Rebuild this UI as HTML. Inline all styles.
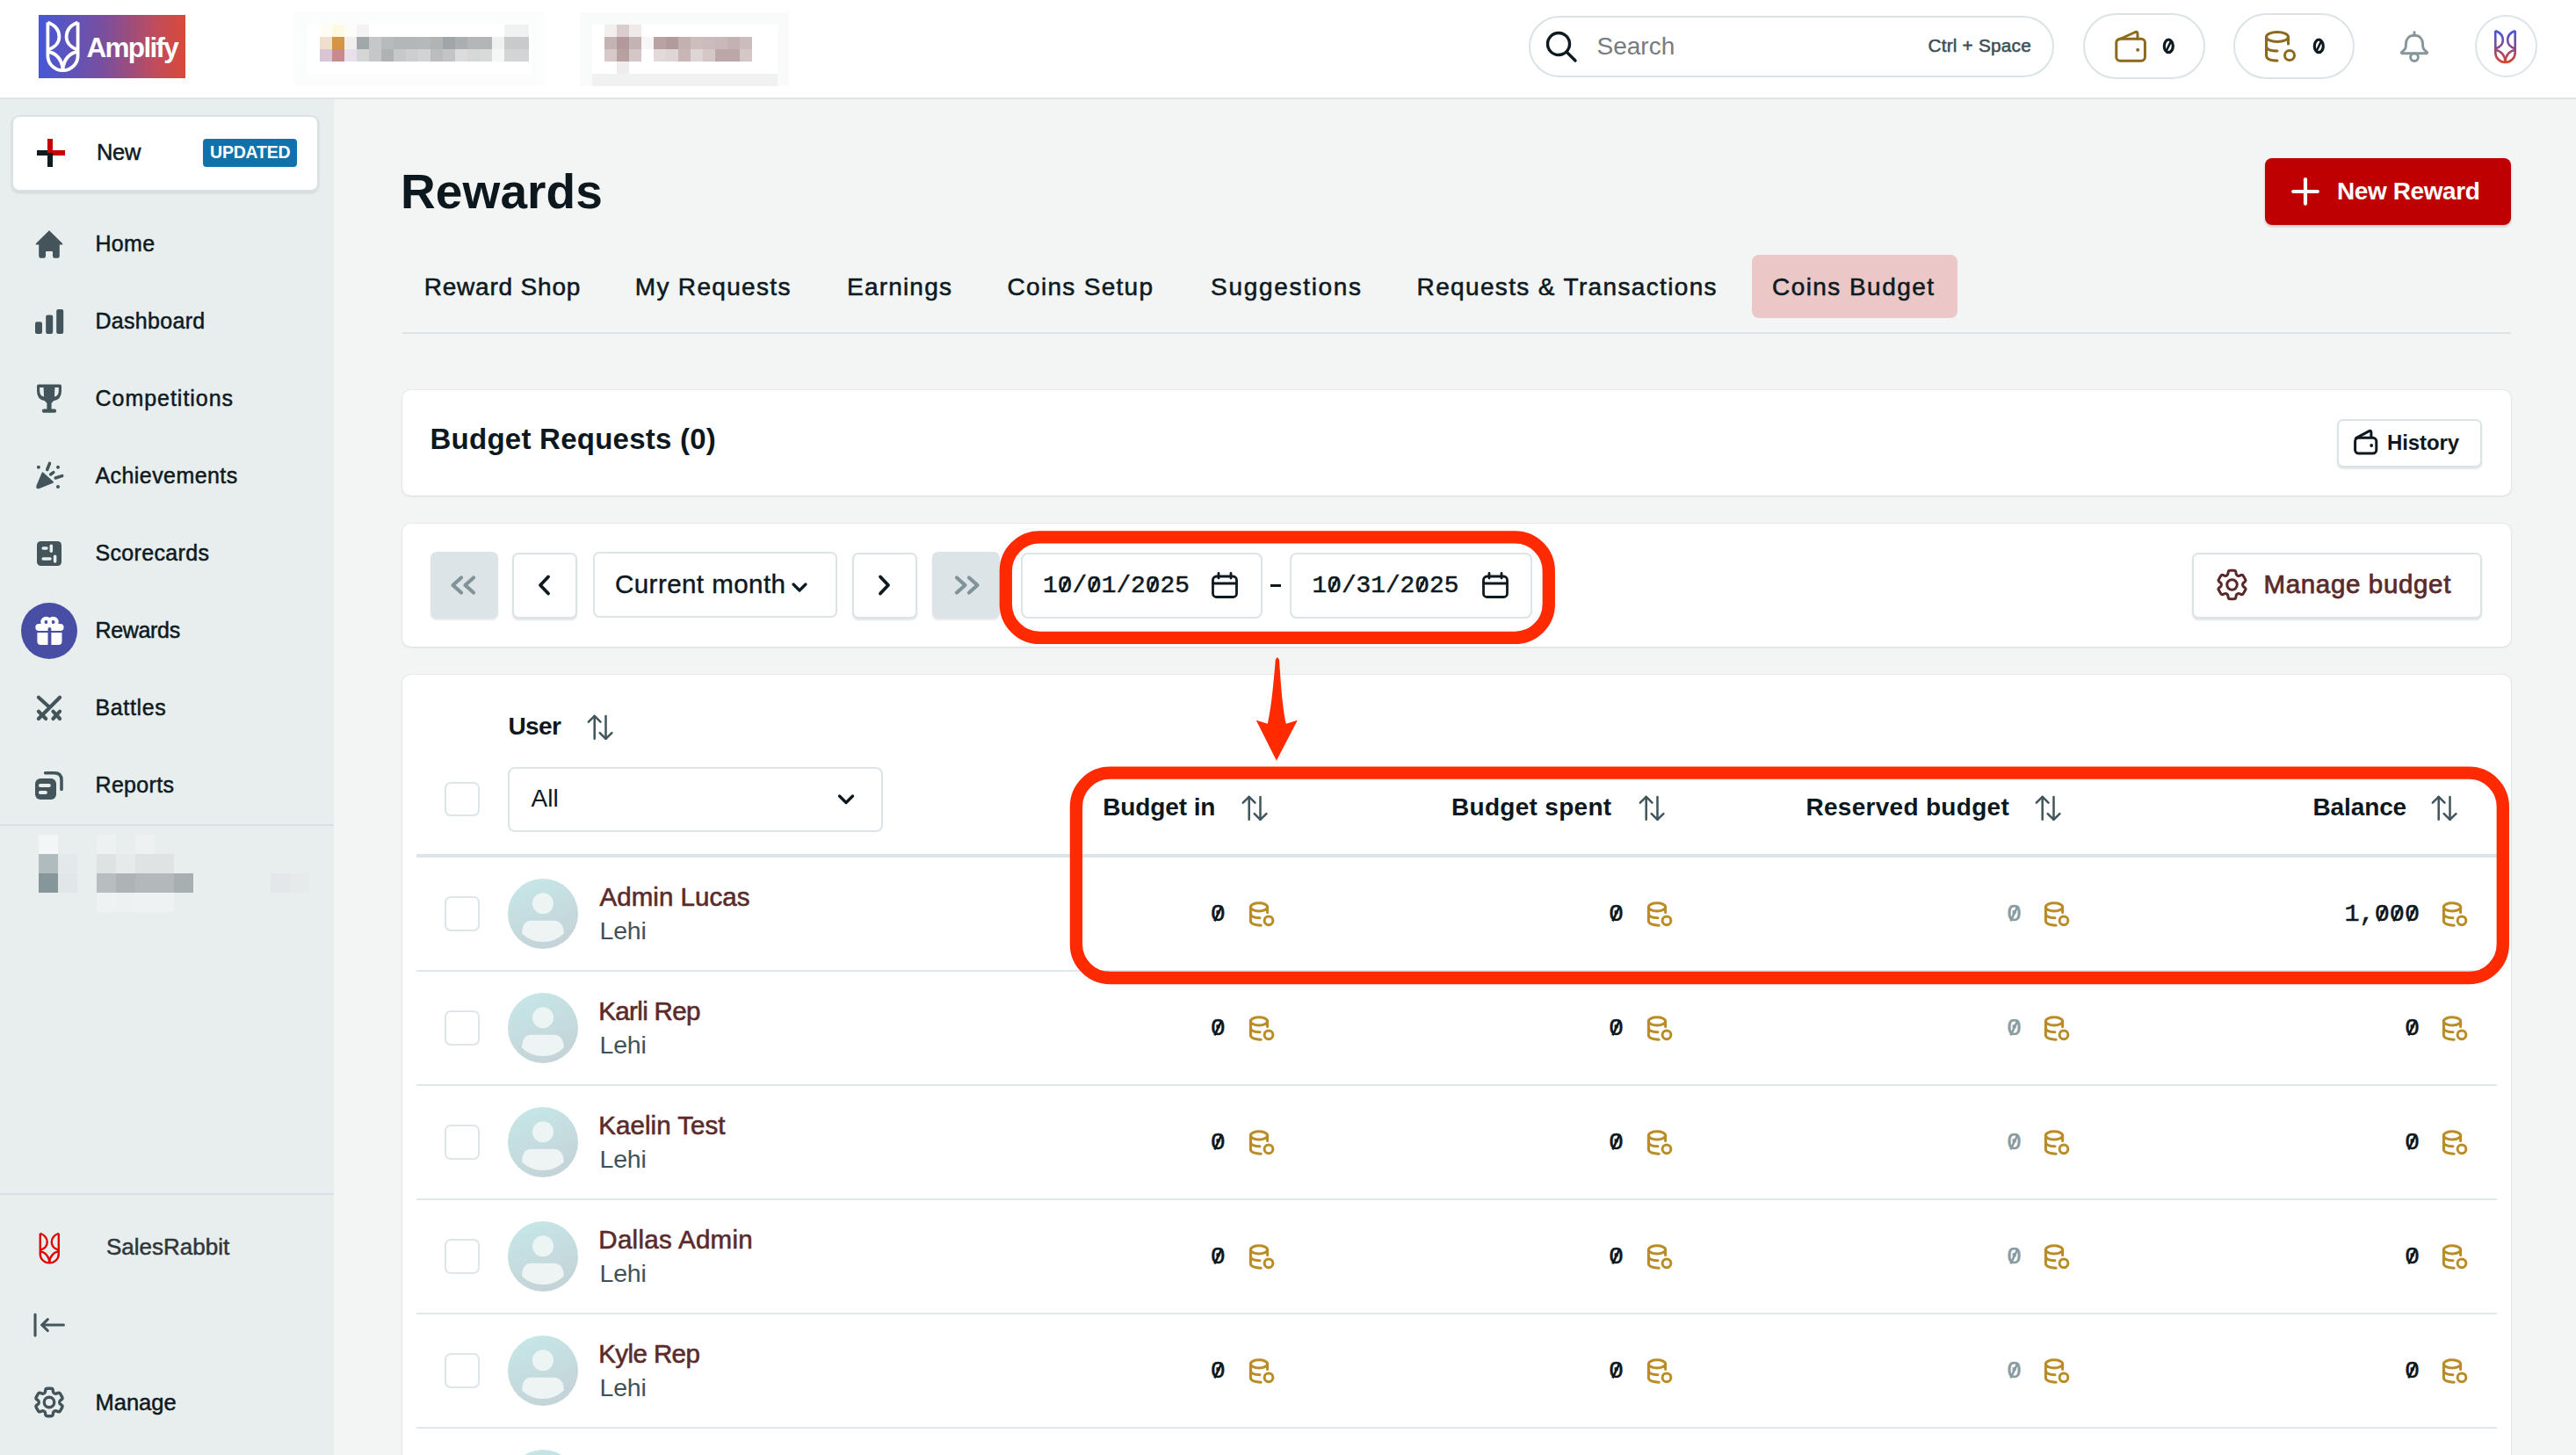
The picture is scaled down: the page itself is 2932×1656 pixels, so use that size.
<!DOCTYPE html>
<html><head><meta charset="utf-8">
<style>
*{box-sizing:border-box;margin:0;padding:0}
html,body{width:2932px;height:1656px;overflow:hidden;background:#f3f5f5;font-family:"Liberation Sans",sans-serif;color:#0e1a1f}
.a{position:absolute}
.t{position:absolute;white-space:nowrap;line-height:1}
#hdr{position:absolute;left:0;top:0;width:2932px;height:113px;background:#fff;border-bottom:2px solid #dde5e8}
#side{position:absolute;left:0;top:113px;width:380px;height:1543px;background:#e8eeee}
.card{position:absolute;background:#fff;border-radius:9px;box-shadow:0 0 1.5px rgba(0,0,0,.16),0 1px 3px rgba(0,0,0,.08)}
.btn{position:absolute;background:#fff;border:2px solid #dae3e6;border-radius:7px;box-shadow:0 2px 2px rgba(20,40,50,.12)}
.nav{font-size:25px;letter-spacing:.3px;color:#0e1a1f;-webkit-text-stroke:.5px #0e1a1f}
.tab{font-size:28px;letter-spacing:.8px;color:#0e1a1f;-webkit-text-stroke:.55px #0e1a1f}
.mono{font-family:"Liberation Mono",monospace;-webkit-text-stroke:.5px currentColor}
.z{position:relative;display:inline-block}
.z{position:relative;display:inline-block}
.zs{position:absolute;left:0;top:0;width:.6em;height:1em;overflow:visible}
svg{position:absolute;overflow:visible}
</style></head><body>

<!-- HEADER -->
<div id="hdr"></div>
<div class="a" style="left:44px;top:17px;width:167px;height:72px;background:linear-gradient(90deg,#4657d8 0%,#7a4f9c 45%,#c04c5c 80%,#d9493a 100%)"></div>
<svg style="left:50px;top:21px" width="43" height="64" viewBox="-4.4 -4.5 43 64"><g fill="none" stroke="#fff" stroke-width="3.8" stroke-linejoin="round"><path d="M0 0 V38 C0 47.5 8 54.7 17.1 54.7 C26.2 54.7 34.2 47.5 34.2 38 V0"/><path d="M0 0 C8 3 13 9 13 16.4 C13 23 8 28.5 0 31"/><path d="M34.2 0 C26.2 3 21.2 9 21.2 16.4 C21.2 23 26.2 28.5 34.2 31"/><path d="M0 33.5 C9 34.5 16.5 42 17.1 54"/><path d="M34.2 33.5 C25.2 34.5 17.7 42 17.1 54"/></g></svg>
<div class="t" style="left:98.5px;top:38.6px;font-size:31.5px;font-weight:bold;color:#fff;letter-spacing:-1.7px">Amplify</div>

<!-- blurred breadcrumb -->
<div class="a" style="left:335px;top:14px;width:285px;height:84px;background:#fbfcfc"></div>
<div class="a" style="left:350px;top:28px;width:255px;height:56px;background:#fff"></div>
<div class="a" style="left:660px;top:14px;width:238px;height:84px;background:#f9fafa"></div>
<div class="a" style="left:674px;top:28px;width:211px;height:56px;background:#fff"></div>
<div class="a" style="left:674px;top:84px;width:211px;height:14px;background:#f0f2f2"></div>
<div class="a" style="left:364px;top:28px;width:14px;height:14px;background:#fffdf3"></div><div class="a" style="left:378px;top:28px;width:14px;height:14px;background:#fff9e2"></div><div class="a" style="left:392px;top:28px;width:14px;height:14px;background:#fdfcf8"></div><div class="a" style="left:406px;top:28px;width:14px;height:14px;background:#f3f3f3"></div><div class="a" style="left:574px;top:28px;width:14px;height:14px;background:#f0f1f1"></div><div class="a" style="left:588px;top:28px;width:14px;height:14px;background:#f0f1f1"></div><div class="a" style="left:364px;top:42px;width:14px;height:14px;background:#f0dfcc"></div><div class="a" style="left:378px;top:42px;width:14px;height:14px;background:#d69443"></div><div class="a" style="left:392px;top:42px;width:14px;height:14px;background:#f0efed"></div><div class="a" style="left:406px;top:42px;width:14px;height:14px;background:#a1a7a9"></div><div class="a" style="left:420px;top:42px;width:14px;height:14px;background:#c5c7c8"></div><div class="a" style="left:434px;top:42px;width:14px;height:14px;background:#b7bbbc"></div><div class="a" style="left:448px;top:42px;width:14px;height:14px;background:#b3b7b8"></div><div class="a" style="left:462px;top:42px;width:14px;height:14px;background:#b3b7b8"></div><div class="a" style="left:476px;top:42px;width:14px;height:14px;background:#b5b9ba"></div><div class="a" style="left:490px;top:42px;width:14px;height:14px;background:#b0b4b5"></div><div class="a" style="left:504px;top:42px;width:14px;height:14px;background:#9fa5a8"></div><div class="a" style="left:518px;top:42px;width:14px;height:14px;background:#abafb2"></div><div class="a" style="left:532px;top:42px;width:14px;height:14px;background:#b3b7b8"></div><div class="a" style="left:546px;top:42px;width:14px;height:14px;background:#b1b5b6"></div><div class="a" style="left:560px;top:42px;width:14px;height:14px;background:#eff0f0"></div><div class="a" style="left:574px;top:42px;width:14px;height:14px;background:#c8cacb"></div><div class="a" style="left:588px;top:42px;width:14px;height:14px;background:#c8cacb"></div><div class="a" style="left:364px;top:56px;width:14px;height:14px;background:#d9c5d3"></div><div class="a" style="left:378px;top:56px;width:14px;height:14px;background:#c98a8e"></div><div class="a" style="left:392px;top:56px;width:14px;height:14px;background:#e8e0ec"></div><div class="a" style="left:406px;top:56px;width:14px;height:14px;background:#d4d6d6"></div><div class="a" style="left:420px;top:56px;width:14px;height:14px;background:#c5c7c8"></div><div class="a" style="left:434px;top:56px;width:14px;height:14px;background:#aeb2b3"></div><div class="a" style="left:448px;top:56px;width:14px;height:14px;background:#c6c8c9"></div><div class="a" style="left:462px;top:56px;width:14px;height:14px;background:#cdced0"></div><div class="a" style="left:476px;top:56px;width:14px;height:14px;background:#d2d3d4"></div><div class="a" style="left:490px;top:56px;width:14px;height:14px;background:#babcbd"></div><div class="a" style="left:504px;top:56px;width:14px;height:14px;background:#c2c4c5"></div><div class="a" style="left:518px;top:56px;width:14px;height:14px;background:#dcdcdd"></div><div class="a" style="left:532px;top:56px;width:14px;height:14px;background:#d6d7d7"></div><div class="a" style="left:546px;top:56px;width:14px;height:14px;background:#d8d9d9"></div><div class="a" style="left:560px;top:56px;width:14px;height:14px;background:#f5f6f6"></div><div class="a" style="left:574px;top:56px;width:14px;height:14px;background:#d3d4d5"></div><div class="a" style="left:588px;top:56px;width:14px;height:14px;background:#d3d4d5"></div><div class="a" style="left:688px;top:28px;width:14px;height:14px;background:#f3efef"></div><div class="a" style="left:702px;top:28px;width:14px;height:14px;background:#d9cdce"></div><div class="a" style="left:716px;top:28px;width:14px;height:14px;background:#efe9ea"></div><div class="a" style="left:688px;top:42px;width:14px;height:14px;background:#c4b3b3"></div><div class="a" style="left:702px;top:42px;width:14px;height:14px;background:#b39999"></div><div class="a" style="left:716px;top:42px;width:14px;height:14px;background:#c4b3b3"></div><div class="a" style="left:730px;top:42px;width:14px;height:14px;background:#f7f5f5"></div><div class="a" style="left:744px;top:42px;width:14px;height:14px;background:#b9a2a3"></div><div class="a" style="left:758px;top:42px;width:14px;height:14px;background:#b39b9c"></div><div class="a" style="left:772px;top:42px;width:14px;height:14px;background:#c3b0b1"></div><div class="a" style="left:786px;top:42px;width:14px;height:14px;background:#cdbdbd"></div><div class="a" style="left:800px;top:42px;width:14px;height:14px;background:#cbbbbc"></div><div class="a" style="left:814px;top:42px;width:14px;height:14px;background:#c8b8b9"></div><div class="a" style="left:828px;top:42px;width:14px;height:14px;background:#c4b2b3"></div><div class="a" style="left:842px;top:42px;width:14px;height:14px;background:#cbbcbd"></div><div class="a" style="left:688px;top:56px;width:14px;height:14px;background:#d7c8c9"></div><div class="a" style="left:702px;top:56px;width:14px;height:14px;background:#b8a0a1"></div><div class="a" style="left:716px;top:56px;width:14px;height:14px;background:#d5c6c7"></div><div class="a" style="left:730px;top:56px;width:14px;height:14px;background:#ffffff"></div><div class="a" style="left:744px;top:56px;width:14px;height:14px;background:#e3d9da"></div><div class="a" style="left:758px;top:56px;width:14px;height:14px;background:#e0d5d6"></div><div class="a" style="left:772px;top:56px;width:14px;height:14px;background:#c8b6b7"></div><div class="a" style="left:786px;top:56px;width:14px;height:14px;background:#e0d5d6"></div><div class="a" style="left:800px;top:56px;width:14px;height:14px;background:#d5c6c7"></div><div class="a" style="left:814px;top:56px;width:14px;height:14px;background:#bca7a8"></div><div class="a" style="left:828px;top:56px;width:14px;height:14px;background:#bca7a8"></div><div class="a" style="left:842px;top:56px;width:14px;height:14px;background:#d5c6c7"></div><div class="a" style="left:702px;top:70px;width:14px;height:14px;background:#f0ecec"></div>

<!-- search -->
<div class="a" style="left:1740px;top:18px;width:598px;height:70px;border:2px solid #d9e3e6;border-radius:36px;background:#fff"></div>
<svg style="left:1759px;top:35px" width="36" height="36" viewBox="0 0 36 36"><circle cx="15" cy="15" r="12.5" fill="none" stroke="#0e1a1f" stroke-width="3.4"/><path d="M24 24 L34 34" stroke="#0e1a1f" stroke-width="3.4" stroke-linecap="round"/></svg>
<div class="t" style="left:1817.5px;top:38.5px;font-size:28px;color:#767b7d">Search</div>
<div class="t" style="left:2194.5px;top:41.5px;font-size:20.8px;letter-spacing:.2px;color:#3d4f55;-webkit-text-stroke:.55px #3d4f55">Ctrl + Space</div>

<!-- pills -->
<div class="a" style="left:2371px;top:15px;width:139px;height:75px;border:2px solid #dbe3e6;border-radius:38px;background:#fff"></div>
<svg style="left:2407px;top:35px" width="36" height="36" viewBox="0 0 36 36"><path d="M3.5 10.5 L23.5 1.5 Q26 0.6 26 3.5 L26 9" fill="none" stroke="#8c6a1c" stroke-width="3" stroke-linejoin="round" stroke-linecap="round"/><rect x="1.8" y="9.3" width="32.6" height="24.9" rx="4.2" fill="none" stroke="#8c6a1c" stroke-width="3"/><circle cx="26.2" cy="21.7" r="2" fill="#8c6a1c"/></svg>
<svg style="left:2461px;top:43px" width="15" height="19" viewBox="0 0 15 19"><g fill="none" stroke="#0e1a1f" stroke-linecap="round"><ellipse cx="7.3" cy="9.4" rx="5" ry="7.2" stroke-width="3.2"/><path d="M5 14.2 L9.8 4.4" stroke-width="2.6"/></g></svg>
<div class="a" style="left:2542px;top:15px;width:138px;height:75px;border:2px solid #dbe3e6;border-radius:38px;background:#fff"></div>
<svg style="left:2578px;top:35px" width="36" height="36" viewBox="0 0 36 36"><g fill="none" stroke="#8c6a1c" stroke-width="3" stroke-linecap="round"><ellipse cx="14" cy="7" rx="12.5" ry="5.5"/><path d="M1.5 7 V28 Q1.5 34 14 34"/><path d="M26.5 7 V15"/><path d="M1.5 17.5 Q1.5 23 14 23"/><circle cx="28" cy="28" r="5.5"/></g></svg>
<svg style="left:2631.5px;top:43px" width="15" height="19" viewBox="0 0 15 19"><g fill="none" stroke="#0e1a1f" stroke-linecap="round"><ellipse cx="7.3" cy="9.4" rx="5" ry="7.2" stroke-width="3.2"/><path d="M5 14.2 L9.8 4.4" stroke-width="2.6"/></g></svg>
<svg style="left:2731px;top:35px" width="34" height="38" viewBox="0 0 34 38"><g fill="none" stroke="#86979c" stroke-width="2.9" stroke-linejoin="round" stroke-linecap="round"><path d="M17 5.2 C11 5.2 7.6 9.5 7.4 15 L7.3 18.2 C7.2 19.6 6.6 20.6 5.6 21.6 L3 24 Q1.4 25.8 3.6 25.8 H30.4 Q32.6 25.8 31 24 L28.4 21.6 C27.4 20.6 26.8 19.6 26.7 18.2 L26.6 15 C26.4 9.5 23 5.2 17 5.2 Z"/><path d="M17 1.6 V5"/><circle cx="17" cy="30.1" r="4.4"/></g></svg>
<div class="a" style="left:2817px;top:17px;width:71px;height:71px;border:2px solid #dce4e7;border-radius:50%;background:#fff"></div>
<svg style="left:2837px;top:32px" width="29" height="42" viewBox="-4.4 -4.5 43 64"><defs><linearGradient id="lg1" gradientUnits="userSpaceOnUse" x1="0" y1="0" x2="0" y2="55"><stop offset="0" stop-color="#4656dc"/><stop offset=".5" stop-color="#85498f"/><stop offset="1" stop-color="#d8442f"/></linearGradient></defs><g fill="none" stroke="url(#lg1)" stroke-width="4" stroke-linejoin="round"><path d="M0 0 V38 C0 47.5 8 54.7 17.1 54.7 C26.2 54.7 34.2 47.5 34.2 38 V0"/><path d="M0 0 C8 3 13 9 13 16.4 C13 23 8 28.5 0 31"/><path d="M34.2 0 C26.2 3 21.2 9 21.2 16.4 C21.2 23 26.2 28.5 34.2 31"/><path d="M0 33.5 C9 34.5 16.5 42 17.1 54"/><path d="M34.2 33.5 C25.2 34.5 17.7 42 17.1 54"/></g></svg>

<!-- SIDEBAR -->
<div id="side"></div>

<div class="card" style="left:13px;top:131px;width:350px;height:87px;border-radius:9px;border:2px solid #dae1e4;box-shadow:0 2px 3px rgba(0,0,0,.10)"></div>
<div class="a" style="left:42px;top:171px;width:16px;height:6px;background:#111a1e"></div>
<div class="a" style="left:58px;top:171px;width:16px;height:6px;background:#c80000"></div>
<div class="a" style="left:54px;top:158px;width:6px;height:16px;background:#c80000"></div>
<div class="a" style="left:54px;top:174px;width:6px;height:16px;background:#111a1e"></div>
<div class="t" style="left:110px;top:160.5px;font-size:25.5px;letter-spacing:-.3px;color:#0e1a1f;-webkit-text-stroke:.5px #0e1a1f">New</div>
<div class="a" style="left:231px;top:158px;width:107px;height:32px;background:#1172ab;border-radius:4px"></div>
<div class="t" style="left:239px;top:163.9px;font-size:19.5px;font-weight:bold;letter-spacing:-.2px;color:#fff">UPDATED</div>
<div class="t nav" style="left:108.5px;top:264.8px;letter-spacing:0.3px">Home</div>
<div class="t nav" style="left:108.5px;top:352.8px;letter-spacing:0.3px">Dashboard</div>
<div class="t nav" style="left:108.5px;top:440.8px;letter-spacing:0.97px">Competitions</div>
<div class="t nav" style="left:108.5px;top:528.8px;letter-spacing:0.42px">Achievements</div>
<div class="t nav" style="left:108.5px;top:616.8px;letter-spacing:0.33px">Scorecards</div>
<div class="t nav" style="left:108.5px;top:704.8px;letter-spacing:-0.33px">Rewards</div>
<div class="t nav" style="left:108.5px;top:792.8px;letter-spacing:0.63px">Battles</div>
<div class="t nav" style="left:108.5px;top:880.8px;letter-spacing:0.33px">Reports</div>

<svg style="left:39px;top:261px" width="34" height="34" viewBox="0 0 34 34"><path d="M17 1.2 L32 16 Q33 17.5 31 17.5 L28.8 17.5 L28.8 30.5 Q28.8 32.8 26.5 32.8 L23.3 32.8 Q21 32.8 21 30.5 L21 26 Q21 25 20 25 L14 25 Q13 25 13 26 L13 30.5 Q13 32.8 10.7 32.8 L7.5 32.8 Q5.2 32.8 5.2 30.5 L5.2 17.5 L3 17.5 Q1 17.5 2 16 Z" fill="#43555a"/></svg>
<svg style="left:39.8px;top:351.8px" width="32" height="28" viewBox="0 0 32 28"><rect x="0" y="14.2" width="8" height="13.8" rx="2" fill="#43555a"/><rect x="12.2" y="6.4" width="8" height="21.6" rx="2" fill="#43555a"/><rect x="24.2" y="0" width="8" height="28" rx="2" fill="#43555a"/></svg>
<svg style="left:41px;top:437px" width="30" height="34" viewBox="0 0 30 34"><path d="M3 0.6 H27 Q29 0.6 29 2.6 V8 Q29 18 20 19.2 L17.6 22 V28.5 H21 Q23.2 28.5 23.2 30.7 Q23.2 32.8 21 32.8 H9 Q6.8 32.8 6.8 30.7 Q6.8 28.5 9 28.5 H12.4 V22 L10 19.2 Q1 18 1 8 V2.6 Q1 0.6 3 0.6 Z M4.2 4 V8 Q4.2 13.5 9 14.6 L8.6 4 Z M25.8 4 H21.4 L21 14.6 Q25.8 13.5 25.8 8 Z" fill="#43555a" fill-rule="evenodd"/></svg>
<svg style="left:40px;top:525px" width="34" height="34" viewBox="0 0 34 34"><path d="M8.6 13.4 L20 23.7 L4.5 30 Q1.5 31 2.4 28 Z" fill="#43555a" stroke="#43555a" stroke-width="2" stroke-linejoin="round"/><g stroke="#43555a" stroke-width="3.5" stroke-linecap="round" fill="none"><path d="M13.7 9.5 L16.5 2.4"/><path d="M17.6 15 L20.8 12.6"/><path d="M23.2 19 L30.7 16.6"/></g><g fill="#43555a"><circle cx="3.9" cy="6.8" r="2"/><circle cx="26" cy="6.8" r="2"/><circle cx="26" cy="28.9" r="2"/></g></svg>
<svg style="left:41.8px;top:615.8px" width="28" height="28" viewBox="0 0 28 28"><rect x="0" y="0" width="28" height="28" rx="4.5" fill="#43555a"/><g stroke="#e8eeee" stroke-width="3.5" stroke-linecap="round"><path d="M7.2 7.9 H10.9"/><path d="M16.3 5.2 V11.2"/><path d="M7.2 20 H15"/><path d="M20.6 17.2 V23"/></g></svg>
<div class="a" style="left:24px;top:685.5px;width:64px;height:64px;border-radius:50%;background:#474ea4"></div>
<svg style="left:39.5px;top:700px" width="33" height="35" viewBox="0 0 33 35"><g fill="none" stroke="#fff" stroke-width="4.2"><circle cx="12.5" cy="7.9" r="4.1"/><circle cx="20.5" cy="7.9" r="4.1"/></g><g fill="#fff"><rect x="0.3" y="9.9" width="32.3" height="8.2" rx="4.1"/><path d="M2.4 19.9 H14.5 V34.1 H6.4 Q2.4 34.1 2.4 30.1 Z"/><path d="M18.4 19.9 H30.5 V30.1 Q30.5 34.1 26.5 34.1 H18.4 Z"/></g><path d="M14.5 18.2 V15.9 Q14.5 14 16.45 14 Q18.4 14 18.4 15.9 V18.2 Z" fill="#474ea4"/></svg>
<svg style="left:39px;top:789px" width="34" height="34" viewBox="0 0 34 34"><g stroke="#43555a" stroke-width="4.1" stroke-linecap="round" fill="none"><path d="M4.9 4.7 L16.8 15.6"/><path d="M29.1 4.7 L4.9 29"/><path d="M4.9 20.7 L13.2 29"/><path d="M21.4 20.7 L29.1 29"/><path d="M29.1 20.7 L21.4 29"/></g></svg>
<svg style="left:39px;top:877px" width="34" height="36" viewBox="0 0 34 36"><rect x="1" y="9" width="24" height="24" rx="6" fill="#43555a"/><g stroke="#e8eeee" stroke-width="4" stroke-linecap="round"><path d="M6.9 17 H16.8"/><path d="M6.9 25 H12.9"/></g><path d="M12.6 2.8 H23 Q31 2.8 31 10.8 V21.4" fill="none" stroke="#43555a" stroke-width="3.6" stroke-linecap="round"/></svg>
<div class="a" style="left:0;top:938px;width:380px;height:2px;background:#d6e1e5"></div>
<div class="a" style="left:44px;top:950px;width:22px;height:22px;background:#f3f6f7"></div><div class="a" style="left:110px;top:950px;width:22px;height:22px;background:#edf1f2"></div><div class="a" style="left:154px;top:950px;width:22px;height:22px;background:#edf1f2"></div><div class="a" style="left:44px;top:972px;width:22px;height:22px;background:#b0bbbd"></div><div class="a" style="left:66px;top:972px;width:22px;height:22px;background:#e3e8ea"></div><div class="a" style="left:110px;top:972px;width:22px;height:22px;background:#dde2e3"></div><div class="a" style="left:132px;top:972px;width:22px;height:22px;background:#e6eaeb"></div><div class="a" style="left:154px;top:972px;width:22px;height:22px;background:#dfe3e4"></div><div class="a" style="left:176px;top:972px;width:22px;height:22px;background:#dfe3e4"></div><div class="a" style="left:44px;top:994px;width:22px;height:22px;background:#86979b"></div><div class="a" style="left:66px;top:994px;width:22px;height:22px;background:#e1e7e9"></div><div class="a" style="left:110px;top:994px;width:22px;height:22px;background:#b8bdbf"></div><div class="a" style="left:132px;top:994px;width:22px;height:22px;background:#aeb4b6"></div><div class="a" style="left:154px;top:994px;width:22px;height:22px;background:#b3b8ba"></div><div class="a" style="left:176px;top:994px;width:22px;height:22px;background:#b3b8ba"></div><div class="a" style="left:198px;top:994px;width:22px;height:22px;background:#a8afb1"></div><div class="a" style="left:308px;top:994px;width:22px;height:22px;background:#e3e7ea"></div><div class="a" style="left:330px;top:994px;width:22px;height:22px;background:#e6eaeb"></div><div class="a" style="left:110px;top:1016px;width:22px;height:22px;background:#eef2f3"></div><div class="a" style="left:132px;top:1016px;width:22px;height:22px;background:#edf1f2"></div><div class="a" style="left:154px;top:1016px;width:22px;height:22px;background:#eff2f3"></div><div class="a" style="left:176px;top:1016px;width:22px;height:22px;background:#eff2f3"></div><div class="a" style="left:198px;top:1016px;width:22px;height:22px;background:#e8edee"></div>
<div class="a" style="left:0;top:1357.5px;width:380px;height:2px;background:#d6e1e5"></div>
<svg style="left:43.3px;top:1401px" width="26.5" height="39.4" viewBox="-4.4 -4.5 43 64"><g fill="none" stroke="#e00000" stroke-width="3.8" stroke-linejoin="round"><path d="M0 0 V38 C0 47.5 8 54.7 17.1 54.7 C26.2 54.7 34.2 47.5 34.2 38 V0"/><path d="M0 0 C8 3 13 9 13 16.4 C13 23 8 28.5 0 31"/><path d="M34.2 0 C26.2 3 21.2 9 21.2 16.4 C21.2 23 26.2 28.5 34.2 31"/><path d="M0 33.5 C9 34.5 16.5 42 17.1 54"/><path d="M34.2 33.5 C25.2 34.5 17.7 42 17.1 54"/></g></svg>
<div class="t" style="left:121px;top:1405.9px;font-size:26px;color:#30363a;-webkit-text-stroke:.5px #30363a">SalesRabbit</div>
<svg style="left:38px;top:1494px" width="36" height="28" viewBox="0 0 36 28"><g stroke="#43555a" stroke-width="3.1" stroke-linecap="round" stroke-linejoin="round" fill="none"><path d="M2 2 V26"/><path d="M9.8 14 H34.4"/><path d="M16.3 7.6 L9.8 14 L16.3 20.5"/></g></svg>
<svg style="left:38.9px;top:1579.4px" width="34" height="34" viewBox="2.25 2.25 19.5 19.5"><g fill="none" stroke="#43555a" stroke-width="1.95" stroke-linejoin="round"><path d="M9.594 3.94c.09-.542.56-.94 1.11-.94h2.593c.55 0 1.02.398 1.11.94l.213 1.281c.063.374.313.686.645.87.074.04.147.083.22.127.325.196.72.257 1.075.124l1.217-.456a1.125 1.125 0 0 1 1.37.49l1.296 2.247a1.125 1.125 0 0 1-.26 1.431l-1.003.827c-.293.241-.438.613-.43.992a7.723 7.723 0 0 1 0 .255c-.008.378.137.75.43.991l1.004.827c.424.35.534.955.26 1.43l-1.298 2.247a1.125 1.125 0 0 1-1.369.491l-1.217-.456c-.355-.133-.75-.072-1.076.124a6.47 6.47 0 0 1-.22.128c-.331.183-.581.495-.644.869l-.213 1.281c-.09.543-.56.94-1.11.94h-2.594c-.55 0-1.019-.398-1.11-.94l-.213-1.281c-.062-.374-.312-.686-.644-.87a6.52 6.52 0 0 1-.22-.127c-.325-.196-.72-.257-1.076-.124l-1.217.456a1.125 1.125 0 0 1-1.369-.49l-1.297-2.247a1.125 1.125 0 0 1 .26-1.431l1.004-.827c.292-.24.437-.613.43-.991a6.932 6.932 0 0 1 0-.255c.007-.38-.138-.751-.43-.992l-1.004-.827a1.125 1.125 0 0 1-.26-1.43l1.297-2.247a1.125 1.125 0 0 1 1.37-.491l1.216.456c.356.133.751.072 1.076-.124.072-.044.146-.086.22-.128.332-.183.582-.495.644-.869l.214-1.28Z"/><circle cx="12" cy="12" r="3.3"/></g></svg>
<div class="t nav" style="left:108.5px;top:1583.5px;font-size:25.5px;letter-spacing:0">Manage</div>

<!-- MAIN -->
<div class="t" style="left:456px;top:190.8px;font-size:55px;font-weight:bold;letter-spacing:.1px;color:#0c181d">Rewards</div>
<div class="a" style="left:2578px;top:180px;width:280px;height:76px;background:#bf0000;border-radius:8px;box-shadow:0 2px 3px rgba(0,0,0,.2)"></div>
<svg style="left:2607px;top:201px" width="34" height="34" viewBox="0 0 34 34"><g stroke="#fff" stroke-width="4.2" stroke-linecap="round"><path d="M17 3.2 V30.8"/><path d="M3.2 17 H30.8"/></g></svg>
<div class="t" style="left:2660px;top:203.8px;font-size:28px;font-weight:bold;letter-spacing:-.4px;color:#fff">New Reward</div>
<div class="a" style="left:1994px;top:290px;width:234px;height:71.5px;background:#ebc7c8;border-radius:8px"></div>
<div class="t tab" style="left:482.7px;top:313.1px;letter-spacing:0.8px">Reward Shop</div>
<div class="t tab" style="left:722.8px;top:313.1px;letter-spacing:1.32px">My Requests</div>
<div class="t tab" style="left:964px;top:313.1px;letter-spacing:1.2px">Earnings</div>
<div class="t tab" style="left:1146.5px;top:313.1px;letter-spacing:1.3px">Coins Setup</div>
<div class="t tab" style="left:1378px;top:313.1px;letter-spacing:1.7px">Suggestions</div>
<div class="t tab" style="left:1612.6px;top:313.1px;letter-spacing:1.35px">Requests &amp; Transactions</div>
<div class="t tab" style="left:2017px;top:313.1px;letter-spacing:1.44px">Coins Budget</div>
<div class="a" style="left:458px;top:378px;width:2400px;height:2px;background:#dce4e7"></div>

<!-- card 1 -->
<div class="card" style="left:458px;top:444px;width:2400px;height:120px"></div>
<div class="t" style="left:489.5px;top:482.8px;font-size:33px;font-weight:bold;letter-spacing:.25px;color:#0c181d">Budget Requests (0)</div>
<div class="btn" style="left:2659.5px;top:476.5px;width:165.5px;height:55px"></div>
<svg style="left:2677px;top:488px" width="32" height="32" viewBox="0 0 32 32"><g fill="none" stroke="#0e1a1f" stroke-width="3" stroke-linejoin="round" stroke-linecap="round"><path d="M4.6 10.6 L19.6 2.6 Q21.9 1.5 21.9 4.2 L21.9 9.8"/><rect x="3.6" y="10.3" width="24.2" height="17.8" rx="4"/></g><circle cx="22.2" cy="19" r="1.9" fill="#0e1a1f"/></svg>
<div class="t" style="left:2717px;top:492px;font-size:24px;font-weight:bold;letter-spacing:-.1px;color:#0c181d">History</div>

<!-- card 2 -->
<div class="card" style="left:458px;top:596px;width:2400px;height:140px"></div>
<div class="a" style="left:489.5px;top:628px;width:77px;height:76px;background:#dde4e7;border-radius:7px;box-shadow:0 2px 2px rgba(20,40,50,.10)"></div>
<svg style="left:511px;top:654px" width="34" height="24" viewBox="0 0 34 24"><g fill="none" stroke="#809399" stroke-width="4.2" stroke-linecap="round" stroke-linejoin="round"><path d="M14 3.5 L4.5 12 L14 20.5"/><path d="M28 3.5 L18.5 12 L28 20.5"/></g></svg>
<div class="btn" style="left:583px;top:628.5px;width:74px;height:75px"></div>
<svg style="left:610px;top:654px" width="20" height="24" viewBox="0 0 20 24"><path d="M14 2.5 L5 12 L14 21.5" fill="none" stroke="#0e1a1f" stroke-width="3.8" stroke-linecap="round" stroke-linejoin="round"/></svg>
<div class="a" style="left:674.5px;top:628px;width:278px;height:75px;background:#fff;border:2px solid #dce4e7;border-radius:7px"></div>
<div class="t" style="left:700px;top:650.3px;font-size:29.5px;letter-spacing:.45px;color:#0c181d;-webkit-text-stroke:.4px #0c181d">Current month</div>
<svg style="left:900px;top:662px" width="20" height="14" viewBox="0 0 20 14"><path d="M3 3 L10 10 L17 3" fill="none" stroke="#0e1a1f" stroke-width="3.2" stroke-linecap="round" stroke-linejoin="round"/></svg>
<div class="btn" style="left:969.5px;top:628.5px;width:74px;height:75px"></div>
<svg style="left:996px;top:654px" width="20" height="24" viewBox="0 0 20 24"><path d="M6 2.5 L15 12 L6 21.5" fill="none" stroke="#0e1a1f" stroke-width="3.8" stroke-linecap="round" stroke-linejoin="round"/></svg>
<div class="a" style="left:1061px;top:628px;width:76.5px;height:76px;background:#dde4e7;border-radius:7px;box-shadow:0 2px 2px rgba(20,40,50,.10)"></div>
<svg style="left:1083px;top:654px" width="34" height="24" viewBox="0 0 34 24"><g fill="none" stroke="#809399" stroke-width="4.2" stroke-linecap="round" stroke-linejoin="round"><path d="M6 3.5 L15.5 12 L6 20.5"/><path d="M20 3.5 L29.5 12 L20 20.5"/></g></svg>
<div class="a" style="left:1161.5px;top:628.5px;width:275px;height:75px;background:#fff;border:2px solid #dce4e7;border-radius:8px"></div>
<div class="t mono" style="left:1187px;top:653.2px;font-size:27.8px;color:#0c181d">1<span class="z">0<svg class="zs" viewBox="0 0 60 100"><path d="M15.5 75 L44.5 15" stroke="currentColor" stroke-width="9" stroke-linecap="butt"/></svg></span>/<span class="z">0<svg class="zs" viewBox="0 0 60 100"><path d="M15.5 75 L44.5 15" stroke="currentColor" stroke-width="9" stroke-linecap="butt"/></svg></span>1/2<span class="z">0<svg class="zs" viewBox="0 0 60 100"><path d="M15.5 75 L44.5 15" stroke="currentColor" stroke-width="9" stroke-linecap="butt"/></svg></span>25</div>
<svg style="left:1379px;top:651px" width="30" height="30" viewBox="0 0 30 30"><g fill="none" stroke="#0e1a1f" stroke-width="2.8" stroke-linecap="round"><rect x="1.5" y="5" width="27" height="23.5" rx="4"/><path d="M1.5 13 H28.5"/><path d="M8 1.5 V7"/><path d="M22 1.5 V7"/></g></svg>
<div class="a" style="left:1446px;top:665px;width:12px;height:2.5px;background:#0c181d"></div>
<div class="a" style="left:1467.5px;top:628.5px;width:276px;height:75px;background:#fff;border:2px solid #dce4e7;border-radius:8px"></div>
<div class="t mono" style="left:1493.5px;top:653.2px;font-size:27.8px;color:#0c181d">1<span class="z">0<svg class="zs" viewBox="0 0 60 100"><path d="M15.5 75 L44.5 15" stroke="currentColor" stroke-width="9" stroke-linecap="butt"/></svg></span>/31/2<span class="z">0<svg class="zs" viewBox="0 0 60 100"><path d="M15.5 75 L44.5 15" stroke="currentColor" stroke-width="9" stroke-linecap="butt"/></svg></span>25</div>
<svg style="left:1686.5px;top:651px" width="30" height="30" viewBox="0 0 30 30"><g fill="none" stroke="#0e1a1f" stroke-width="2.8" stroke-linecap="round"><rect x="1.5" y="5" width="27" height="23.5" rx="4"/><path d="M1.5 13 H28.5"/><path d="M8 1.5 V7"/><path d="M22 1.5 V7"/></g></svg>
<div class="btn" style="left:2495px;top:629px;width:330px;height:74.5px"></div>
<svg style="left:2523px;top:648px" width="35" height="35" viewBox="2.25 2.25 19.5 19.5"><g fill="none" stroke="#5a2a2a" stroke-width="1.7" stroke-linejoin="round"><path d="M9.594 3.94c.09-.542.56-.94 1.11-.94h2.593c.55 0 1.02.398 1.11.94l.213 1.281c.063.374.313.686.645.87.074.04.147.083.22.127.325.196.72.257 1.075.124l1.217-.456a1.125 1.125 0 0 1 1.37.49l1.296 2.247a1.125 1.125 0 0 1-.26 1.431l-1.003.827c-.293.241-.438.613-.43.992a7.723 7.723 0 0 1 0 .255c-.008.378.137.75.43.991l1.004.827c.424.35.534.955.26 1.43l-1.298 2.247a1.125 1.125 0 0 1-1.369.491l-1.217-.456c-.355-.133-.75-.072-1.076.124a6.47 6.47 0 0 1-.22.128c-.331.183-.581.495-.644.869l-.213 1.281c-.09.543-.56.94-1.11.94h-2.594c-.55 0-1.019-.398-1.11-.94l-.213-1.281c-.062-.374-.312-.686-.644-.87a6.52 6.52 0 0 1-.22-.127c-.325-.196-.72-.257-1.076-.124l-1.217.456a1.125 1.125 0 0 1-1.369-.49l-1.297-2.247a1.125 1.125 0 0 1 .26-1.431l1.004-.827c.292-.24.437-.613.43-.991a6.932 6.932 0 0 1 0-.255c.007-.38-.138-.751-.43-.992l-1.004-.827a1.125 1.125 0 0 1-.26-1.43l1.297-2.247a1.125 1.125 0 0 1 1.37-.491l1.216.456c.356.133.751.072 1.076-.124.072-.044.146-.086.22-.128.332-.183.582-.495.644-.869l.214-1.28Z"/><circle cx="12" cy="12" r="3.2"/></g></svg>
<div class="t" style="left:2576.5px;top:650.3px;font-size:29.5px;letter-spacing:.65px;color:#5a2a2a;-webkit-text-stroke:.75px #5a2a2a">Manage budget</div>

<!-- TABLE CARD -->
<div class="card" style="left:458px;top:767.5px;width:2400px;height:1000px"></div>
<div class="t" style="left:578.5px;top:812.6px;font-size:28px;font-weight:bold;letter-spacing:-.6px;color:#0c181d">User</div>
<svg style="left:669px;top:814px" width="28" height="28" viewBox="0 0 28 28"><g fill="none" stroke="#3f555b" stroke-width="2.5" stroke-linecap="round" stroke-linejoin="round"><path d="M7.7 26.8 V0.9"/><path d="M0.8 7.7 L7.7 0.9 L14.5 7.7"/><path d="M20.5 0.9 V26.8"/><path d="M13.7 20.1 L20.5 26.8 L27.4 20.1"/></g></svg>
<div class="a" style="left:506px;top:889.5px;width:40px;height:39px;border:2px solid #dce5e8;border-radius:7px;background:#fff"></div>
<div class="a" style="left:578px;top:872.5px;width:426.5px;height:74.5px;border:2px solid #dbe4e7;border-radius:8px;background:#fff"></div>
<div class="t" style="left:604.5px;top:895.1px;font-size:28px;color:#0c181d">All</div>
<svg style="left:952px;top:902px" width="22" height="16" viewBox="0 0 22 16"><path d="M3.5 4 L11 11.5 L18.5 4" fill="none" stroke="#0c181d" stroke-width="3.3" stroke-linecap="round" stroke-linejoin="round"/></svg>
<div class="t" style="left:1255.2px;top:904.5px;font-size:28px;font-weight:bold;letter-spacing:-.1px;color:#0c181d">Budget in</div>
<svg style="left:1414.3px;top:906px" width="28" height="28" viewBox="0 0 28 28"><g fill="none" stroke="#3f555b" stroke-width="2.5" stroke-linecap="round" stroke-linejoin="round"><path d="M7.7 26.8 V0.9"/><path d="M0.8 7.7 L7.7 0.9 L14.5 7.7"/><path d="M20.5 0.9 V26.8"/><path d="M13.7 20.1 L20.5 26.8 L27.4 20.1"/></g></svg>
<div class="t" style="left:1652px;top:904.5px;font-size:28px;font-weight:bold;letter-spacing:.3px;color:#0c181d">Budget spent</div>
<svg style="left:1865.6px;top:906px" width="28" height="28" viewBox="0 0 28 28"><g fill="none" stroke="#3f555b" stroke-width="2.5" stroke-linecap="round" stroke-linejoin="round"><path d="M7.7 26.8 V0.9"/><path d="M0.8 7.7 L7.7 0.9 L14.5 7.7"/><path d="M20.5 0.9 V26.8"/><path d="M13.7 20.1 L20.5 26.8 L27.4 20.1"/></g></svg>
<div class="t" style="left:2055.4px;top:904.5px;font-size:28px;font-weight:bold;letter-spacing:.3px;color:#0c181d">Reserved budget</div>
<svg style="left:2317px;top:906px" width="28" height="28" viewBox="0 0 28 28"><g fill="none" stroke="#3f555b" stroke-width="2.5" stroke-linecap="round" stroke-linejoin="round"><path d="M7.7 26.8 V0.9"/><path d="M0.8 7.7 L7.7 0.9 L14.5 7.7"/><path d="M20.5 0.9 V26.8"/><path d="M13.7 20.1 L20.5 26.8 L27.4 20.1"/></g></svg>
<div class="t" style="left:2632.4px;top:904.5px;font-size:28px;font-weight:bold;letter-spacing:-.1px;color:#0c181d">Balance</div>
<svg style="left:2767.5px;top:906px" width="28" height="28" viewBox="0 0 28 28"><g fill="none" stroke="#3f555b" stroke-width="2.5" stroke-linecap="round" stroke-linejoin="round"><path d="M7.7 26.8 V0.9"/><path d="M0.8 7.7 L7.7 0.9 L14.5 7.7"/><path d="M20.5 0.9 V26.8"/><path d="M13.7 20.1 L20.5 26.8 L27.4 20.1"/></g></svg>
<div class="a" style="left:474px;top:972px;width:2368px;height:3.5px;background:#dde5e8"></div>
<div class="a" style="left:506px;top:1020.0px;width:40px;height:40px;border:2px solid #dde5e9;border-radius:7px;background:#fff"></div>
<svg style="left:578px;top:1000.0px" width="80" height="80" viewBox="0 0 80 80"><defs><linearGradient id="ag0" x1=".2" y1="0" x2=".6" y2="1"><stop offset="0" stop-color="#c6e7e7"/><stop offset="1" stop-color="#c4d3d8"/></linearGradient></defs><circle cx="40" cy="40" r="40" fill="url(#ag0)"/><circle cx="40" cy="28.2" r="12" fill="#edf4f4"/><path d="M26 47.7 H52 Q63.7 48 63.7 62.5 Q54 72 40 72 Q26 72 16 62.5 Q16.5 48 26 47.7 Z" fill="#eef4f4"/></svg>
<div class="t" style="left:682.5px;top:1005.8px;font-size:29.5px;letter-spacing:.05px;color:#5a2b2b;-webkit-text-stroke:.6px #5a2b2b">Admin Lucas</div>
<div class="t" style="left:682.5px;top:1044.5px;font-size:28.5px;letter-spacing:-.2px;color:#3d5359">Lehi</div>
<div class="t mono" style="right:1537.2px;top:1027.0px;font-size:28.5px;color:#0c181d"><span class="z">0<svg class="zs" viewBox="0 0 60 100"><path d="M15.5 75 L44.5 15" stroke="currentColor" stroke-width="9" stroke-linecap="butt"/></svg></span></div>
<svg style="left:1421.5px;top:1026.0px" width="28" height="28" viewBox="0 0 28 28"><g fill="none" stroke="#ba8c25" stroke-width="3" stroke-linecap="round"><ellipse cx="11" cy="6.3" rx="9.6" ry="4.6"/><path d="M1.4 6.3 V22 Q1.4 26.8 13.2 27.2"/><path d="M20.6 6.3 V12.6"/><path d="M1.4 13.8 Q1.4 18.5 12 18.7"/><circle cx="22" cy="21.8" r="4.9"/></g></svg>
<div class="t mono" style="right:1083.9px;top:1027.0px;font-size:28.5px;color:#0c181d"><span class="z">0<svg class="zs" viewBox="0 0 60 100"><path d="M15.5 75 L44.5 15" stroke="currentColor" stroke-width="9" stroke-linecap="butt"/></svg></span></div>
<svg style="left:1874.6px;top:1026.0px" width="28" height="28" viewBox="0 0 28 28"><g fill="none" stroke="#ba8c25" stroke-width="3" stroke-linecap="round"><ellipse cx="11" cy="6.3" rx="9.6" ry="4.6"/><path d="M1.4 6.3 V22 Q1.4 26.8 13.2 27.2"/><path d="M20.6 6.3 V12.6"/><path d="M1.4 13.8 Q1.4 18.5 12 18.7"/><circle cx="22" cy="21.8" r="4.9"/></g></svg>
<div class="t mono" style="right:630.8px;top:1027.0px;font-size:28.5px;color:#8a9ba0"><span class="z">0<svg class="zs" viewBox="0 0 60 100"><path d="M15.5 75 L44.5 15" stroke="currentColor" stroke-width="9" stroke-linecap="butt"/></svg></span></div>
<svg style="left:2327.3px;top:1026.0px" width="28" height="28" viewBox="0 0 28 28"><g fill="none" stroke="#ba8c25" stroke-width="3" stroke-linecap="round"><ellipse cx="11" cy="6.3" rx="9.6" ry="4.6"/><path d="M1.4 6.3 V22 Q1.4 26.8 13.2 27.2"/><path d="M20.6 6.3 V12.6"/><path d="M1.4 13.8 Q1.4 18.5 12 18.7"/><circle cx="22" cy="21.8" r="4.9"/></g></svg>
<div class="t mono" style="right:178.0px;top:1027.0px;font-size:28.5px;color:#0c181d">1,<span class="z">0<svg class="zs" viewBox="0 0 60 100"><path d="M15.5 75 L44.5 15" stroke="currentColor" stroke-width="9" stroke-linecap="butt"/></svg></span><span class="z">0<svg class="zs" viewBox="0 0 60 100"><path d="M15.5 75 L44.5 15" stroke="currentColor" stroke-width="9" stroke-linecap="butt"/></svg></span><span class="z">0<svg class="zs" viewBox="0 0 60 100"><path d="M15.5 75 L44.5 15" stroke="currentColor" stroke-width="9" stroke-linecap="butt"/></svg></span></div>
<svg style="left:2779.5px;top:1026.0px" width="28" height="28" viewBox="0 0 28 28"><g fill="none" stroke="#ba8c25" stroke-width="3" stroke-linecap="round"><ellipse cx="11" cy="6.3" rx="9.6" ry="4.6"/><path d="M1.4 6.3 V22 Q1.4 26.8 13.2 27.2"/><path d="M20.6 6.3 V12.6"/><path d="M1.4 13.8 Q1.4 18.5 12 18.7"/><circle cx="22" cy="21.8" r="4.9"/></g></svg>
<div class="a" style="left:474px;top:1103.5px;width:2368px;height:2px;background:#dfe7ea"></div>
<div class="a" style="left:506px;top:1150.0px;width:40px;height:40px;border:2px solid #dde5e9;border-radius:7px;background:#fff"></div>
<svg style="left:578px;top:1130.0px" width="80" height="80" viewBox="0 0 80 80"><defs><linearGradient id="ag1" x1=".2" y1="0" x2=".6" y2="1"><stop offset="0" stop-color="#c6e7e7"/><stop offset="1" stop-color="#c4d3d8"/></linearGradient></defs><circle cx="40" cy="40" r="40" fill="url(#ag1)"/><circle cx="40" cy="28.2" r="12" fill="#edf4f4"/><path d="M26 47.7 H52 Q63.7 48 63.7 62.5 Q54 72 40 72 Q26 72 16 62.5 Q16.5 48 26 47.7 Z" fill="#eef4f4"/></svg>
<div class="t" style="left:681.3px;top:1135.8px;font-size:29.5px;letter-spacing:-0.65px;color:#5a2b2b;-webkit-text-stroke:.6px #5a2b2b">Karli Rep</div>
<div class="t" style="left:682.5px;top:1174.5px;font-size:28.5px;letter-spacing:-.2px;color:#3d5359">Lehi</div>
<div class="t mono" style="right:1537.2px;top:1157.0px;font-size:28.5px;color:#0c181d"><span class="z">0<svg class="zs" viewBox="0 0 60 100"><path d="M15.5 75 L44.5 15" stroke="currentColor" stroke-width="9" stroke-linecap="butt"/></svg></span></div>
<svg style="left:1421.5px;top:1156.0px" width="28" height="28" viewBox="0 0 28 28"><g fill="none" stroke="#ba8c25" stroke-width="3" stroke-linecap="round"><ellipse cx="11" cy="6.3" rx="9.6" ry="4.6"/><path d="M1.4 6.3 V22 Q1.4 26.8 13.2 27.2"/><path d="M20.6 6.3 V12.6"/><path d="M1.4 13.8 Q1.4 18.5 12 18.7"/><circle cx="22" cy="21.8" r="4.9"/></g></svg>
<div class="t mono" style="right:1083.9px;top:1157.0px;font-size:28.5px;color:#0c181d"><span class="z">0<svg class="zs" viewBox="0 0 60 100"><path d="M15.5 75 L44.5 15" stroke="currentColor" stroke-width="9" stroke-linecap="butt"/></svg></span></div>
<svg style="left:1874.6px;top:1156.0px" width="28" height="28" viewBox="0 0 28 28"><g fill="none" stroke="#ba8c25" stroke-width="3" stroke-linecap="round"><ellipse cx="11" cy="6.3" rx="9.6" ry="4.6"/><path d="M1.4 6.3 V22 Q1.4 26.8 13.2 27.2"/><path d="M20.6 6.3 V12.6"/><path d="M1.4 13.8 Q1.4 18.5 12 18.7"/><circle cx="22" cy="21.8" r="4.9"/></g></svg>
<div class="t mono" style="right:630.8px;top:1157.0px;font-size:28.5px;color:#8a9ba0"><span class="z">0<svg class="zs" viewBox="0 0 60 100"><path d="M15.5 75 L44.5 15" stroke="currentColor" stroke-width="9" stroke-linecap="butt"/></svg></span></div>
<svg style="left:2327.3px;top:1156.0px" width="28" height="28" viewBox="0 0 28 28"><g fill="none" stroke="#ba8c25" stroke-width="3" stroke-linecap="round"><ellipse cx="11" cy="6.3" rx="9.6" ry="4.6"/><path d="M1.4 6.3 V22 Q1.4 26.8 13.2 27.2"/><path d="M20.6 6.3 V12.6"/><path d="M1.4 13.8 Q1.4 18.5 12 18.7"/><circle cx="22" cy="21.8" r="4.9"/></g></svg>
<div class="t mono" style="right:178.0px;top:1157.0px;font-size:28.5px;color:#0c181d"><span class="z">0<svg class="zs" viewBox="0 0 60 100"><path d="M15.5 75 L44.5 15" stroke="currentColor" stroke-width="9" stroke-linecap="butt"/></svg></span></div>
<svg style="left:2779.5px;top:1156.0px" width="28" height="28" viewBox="0 0 28 28"><g fill="none" stroke="#ba8c25" stroke-width="3" stroke-linecap="round"><ellipse cx="11" cy="6.3" rx="9.6" ry="4.6"/><path d="M1.4 6.3 V22 Q1.4 26.8 13.2 27.2"/><path d="M20.6 6.3 V12.6"/><path d="M1.4 13.8 Q1.4 18.5 12 18.7"/><circle cx="22" cy="21.8" r="4.9"/></g></svg>
<div class="a" style="left:474px;top:1233.5px;width:2368px;height:2px;background:#dfe7ea"></div>
<div class="a" style="left:506px;top:1280.0px;width:40px;height:40px;border:2px solid #dde5e9;border-radius:7px;background:#fff"></div>
<svg style="left:578px;top:1260.0px" width="80" height="80" viewBox="0 0 80 80"><defs><linearGradient id="ag2" x1=".2" y1="0" x2=".6" y2="1"><stop offset="0" stop-color="#c6e7e7"/><stop offset="1" stop-color="#c4d3d8"/></linearGradient></defs><circle cx="40" cy="40" r="40" fill="url(#ag2)"/><circle cx="40" cy="28.2" r="12" fill="#edf4f4"/><path d="M26 47.7 H52 Q63.7 48 63.7 62.5 Q54 72 40 72 Q26 72 16 62.5 Q16.5 48 26 47.7 Z" fill="#eef4f4"/></svg>
<div class="t" style="left:681.3px;top:1265.8px;font-size:29.5px;letter-spacing:0.05px;color:#5a2b2b;-webkit-text-stroke:.6px #5a2b2b">Kaelin Test</div>
<div class="t" style="left:682.5px;top:1304.5px;font-size:28.5px;letter-spacing:-.2px;color:#3d5359">Lehi</div>
<div class="t mono" style="right:1537.2px;top:1287.0px;font-size:28.5px;color:#0c181d"><span class="z">0<svg class="zs" viewBox="0 0 60 100"><path d="M15.5 75 L44.5 15" stroke="currentColor" stroke-width="9" stroke-linecap="butt"/></svg></span></div>
<svg style="left:1421.5px;top:1286.0px" width="28" height="28" viewBox="0 0 28 28"><g fill="none" stroke="#ba8c25" stroke-width="3" stroke-linecap="round"><ellipse cx="11" cy="6.3" rx="9.6" ry="4.6"/><path d="M1.4 6.3 V22 Q1.4 26.8 13.2 27.2"/><path d="M20.6 6.3 V12.6"/><path d="M1.4 13.8 Q1.4 18.5 12 18.7"/><circle cx="22" cy="21.8" r="4.9"/></g></svg>
<div class="t mono" style="right:1083.9px;top:1287.0px;font-size:28.5px;color:#0c181d"><span class="z">0<svg class="zs" viewBox="0 0 60 100"><path d="M15.5 75 L44.5 15" stroke="currentColor" stroke-width="9" stroke-linecap="butt"/></svg></span></div>
<svg style="left:1874.6px;top:1286.0px" width="28" height="28" viewBox="0 0 28 28"><g fill="none" stroke="#ba8c25" stroke-width="3" stroke-linecap="round"><ellipse cx="11" cy="6.3" rx="9.6" ry="4.6"/><path d="M1.4 6.3 V22 Q1.4 26.8 13.2 27.2"/><path d="M20.6 6.3 V12.6"/><path d="M1.4 13.8 Q1.4 18.5 12 18.7"/><circle cx="22" cy="21.8" r="4.9"/></g></svg>
<div class="t mono" style="right:630.8px;top:1287.0px;font-size:28.5px;color:#8a9ba0"><span class="z">0<svg class="zs" viewBox="0 0 60 100"><path d="M15.5 75 L44.5 15" stroke="currentColor" stroke-width="9" stroke-linecap="butt"/></svg></span></div>
<svg style="left:2327.3px;top:1286.0px" width="28" height="28" viewBox="0 0 28 28"><g fill="none" stroke="#ba8c25" stroke-width="3" stroke-linecap="round"><ellipse cx="11" cy="6.3" rx="9.6" ry="4.6"/><path d="M1.4 6.3 V22 Q1.4 26.8 13.2 27.2"/><path d="M20.6 6.3 V12.6"/><path d="M1.4 13.8 Q1.4 18.5 12 18.7"/><circle cx="22" cy="21.8" r="4.9"/></g></svg>
<div class="t mono" style="right:178.0px;top:1287.0px;font-size:28.5px;color:#0c181d"><span class="z">0<svg class="zs" viewBox="0 0 60 100"><path d="M15.5 75 L44.5 15" stroke="currentColor" stroke-width="9" stroke-linecap="butt"/></svg></span></div>
<svg style="left:2779.5px;top:1286.0px" width="28" height="28" viewBox="0 0 28 28"><g fill="none" stroke="#ba8c25" stroke-width="3" stroke-linecap="round"><ellipse cx="11" cy="6.3" rx="9.6" ry="4.6"/><path d="M1.4 6.3 V22 Q1.4 26.8 13.2 27.2"/><path d="M20.6 6.3 V12.6"/><path d="M1.4 13.8 Q1.4 18.5 12 18.7"/><circle cx="22" cy="21.8" r="4.9"/></g></svg>
<div class="a" style="left:474px;top:1363.5px;width:2368px;height:2px;background:#dfe7ea"></div>
<div class="a" style="left:506px;top:1410.0px;width:40px;height:40px;border:2px solid #dde5e9;border-radius:7px;background:#fff"></div>
<svg style="left:578px;top:1390.0px" width="80" height="80" viewBox="0 0 80 80"><defs><linearGradient id="ag3" x1=".2" y1="0" x2=".6" y2="1"><stop offset="0" stop-color="#c6e7e7"/><stop offset="1" stop-color="#c4d3d8"/></linearGradient></defs><circle cx="40" cy="40" r="40" fill="url(#ag3)"/><circle cx="40" cy="28.2" r="12" fill="#edf4f4"/><path d="M26 47.7 H52 Q63.7 48 63.7 62.5 Q54 72 40 72 Q26 72 16 62.5 Q16.5 48 26 47.7 Z" fill="#eef4f4"/></svg>
<div class="t" style="left:681.3px;top:1395.8px;font-size:29.5px;letter-spacing:0.3px;color:#5a2b2b;-webkit-text-stroke:.6px #5a2b2b">Dallas Admin</div>
<div class="t" style="left:682.5px;top:1434.5px;font-size:28.5px;letter-spacing:-.2px;color:#3d5359">Lehi</div>
<div class="t mono" style="right:1537.2px;top:1417.0px;font-size:28.5px;color:#0c181d"><span class="z">0<svg class="zs" viewBox="0 0 60 100"><path d="M15.5 75 L44.5 15" stroke="currentColor" stroke-width="9" stroke-linecap="butt"/></svg></span></div>
<svg style="left:1421.5px;top:1416.0px" width="28" height="28" viewBox="0 0 28 28"><g fill="none" stroke="#ba8c25" stroke-width="3" stroke-linecap="round"><ellipse cx="11" cy="6.3" rx="9.6" ry="4.6"/><path d="M1.4 6.3 V22 Q1.4 26.8 13.2 27.2"/><path d="M20.6 6.3 V12.6"/><path d="M1.4 13.8 Q1.4 18.5 12 18.7"/><circle cx="22" cy="21.8" r="4.9"/></g></svg>
<div class="t mono" style="right:1083.9px;top:1417.0px;font-size:28.5px;color:#0c181d"><span class="z">0<svg class="zs" viewBox="0 0 60 100"><path d="M15.5 75 L44.5 15" stroke="currentColor" stroke-width="9" stroke-linecap="butt"/></svg></span></div>
<svg style="left:1874.6px;top:1416.0px" width="28" height="28" viewBox="0 0 28 28"><g fill="none" stroke="#ba8c25" stroke-width="3" stroke-linecap="round"><ellipse cx="11" cy="6.3" rx="9.6" ry="4.6"/><path d="M1.4 6.3 V22 Q1.4 26.8 13.2 27.2"/><path d="M20.6 6.3 V12.6"/><path d="M1.4 13.8 Q1.4 18.5 12 18.7"/><circle cx="22" cy="21.8" r="4.9"/></g></svg>
<div class="t mono" style="right:630.8px;top:1417.0px;font-size:28.5px;color:#8a9ba0"><span class="z">0<svg class="zs" viewBox="0 0 60 100"><path d="M15.5 75 L44.5 15" stroke="currentColor" stroke-width="9" stroke-linecap="butt"/></svg></span></div>
<svg style="left:2327.3px;top:1416.0px" width="28" height="28" viewBox="0 0 28 28"><g fill="none" stroke="#ba8c25" stroke-width="3" stroke-linecap="round"><ellipse cx="11" cy="6.3" rx="9.6" ry="4.6"/><path d="M1.4 6.3 V22 Q1.4 26.8 13.2 27.2"/><path d="M20.6 6.3 V12.6"/><path d="M1.4 13.8 Q1.4 18.5 12 18.7"/><circle cx="22" cy="21.8" r="4.9"/></g></svg>
<div class="t mono" style="right:178.0px;top:1417.0px;font-size:28.5px;color:#0c181d"><span class="z">0<svg class="zs" viewBox="0 0 60 100"><path d="M15.5 75 L44.5 15" stroke="currentColor" stroke-width="9" stroke-linecap="butt"/></svg></span></div>
<svg style="left:2779.5px;top:1416.0px" width="28" height="28" viewBox="0 0 28 28"><g fill="none" stroke="#ba8c25" stroke-width="3" stroke-linecap="round"><ellipse cx="11" cy="6.3" rx="9.6" ry="4.6"/><path d="M1.4 6.3 V22 Q1.4 26.8 13.2 27.2"/><path d="M20.6 6.3 V12.6"/><path d="M1.4 13.8 Q1.4 18.5 12 18.7"/><circle cx="22" cy="21.8" r="4.9"/></g></svg>
<div class="a" style="left:474px;top:1493.5px;width:2368px;height:2px;background:#dfe7ea"></div>
<div class="a" style="left:506px;top:1540.0px;width:40px;height:40px;border:2px solid #dde5e9;border-radius:7px;background:#fff"></div>
<svg style="left:578px;top:1520.0px" width="80" height="80" viewBox="0 0 80 80"><defs><linearGradient id="ag4" x1=".2" y1="0" x2=".6" y2="1"><stop offset="0" stop-color="#c6e7e7"/><stop offset="1" stop-color="#c4d3d8"/></linearGradient></defs><circle cx="40" cy="40" r="40" fill="url(#ag4)"/><circle cx="40" cy="28.2" r="12" fill="#edf4f4"/><path d="M26 47.7 H52 Q63.7 48 63.7 62.5 Q54 72 40 72 Q26 72 16 62.5 Q16.5 48 26 47.7 Z" fill="#eef4f4"/></svg>
<div class="t" style="left:681.3px;top:1525.8px;font-size:29.5px;letter-spacing:-0.6px;color:#5a2b2b;-webkit-text-stroke:.6px #5a2b2b">Kyle Rep</div>
<div class="t" style="left:682.5px;top:1564.5px;font-size:28.5px;letter-spacing:-.2px;color:#3d5359">Lehi</div>
<div class="t mono" style="right:1537.2px;top:1547.0px;font-size:28.5px;color:#0c181d"><span class="z">0<svg class="zs" viewBox="0 0 60 100"><path d="M15.5 75 L44.5 15" stroke="currentColor" stroke-width="9" stroke-linecap="butt"/></svg></span></div>
<svg style="left:1421.5px;top:1546.0px" width="28" height="28" viewBox="0 0 28 28"><g fill="none" stroke="#ba8c25" stroke-width="3" stroke-linecap="round"><ellipse cx="11" cy="6.3" rx="9.6" ry="4.6"/><path d="M1.4 6.3 V22 Q1.4 26.8 13.2 27.2"/><path d="M20.6 6.3 V12.6"/><path d="M1.4 13.8 Q1.4 18.5 12 18.7"/><circle cx="22" cy="21.8" r="4.9"/></g></svg>
<div class="t mono" style="right:1083.9px;top:1547.0px;font-size:28.5px;color:#0c181d"><span class="z">0<svg class="zs" viewBox="0 0 60 100"><path d="M15.5 75 L44.5 15" stroke="currentColor" stroke-width="9" stroke-linecap="butt"/></svg></span></div>
<svg style="left:1874.6px;top:1546.0px" width="28" height="28" viewBox="0 0 28 28"><g fill="none" stroke="#ba8c25" stroke-width="3" stroke-linecap="round"><ellipse cx="11" cy="6.3" rx="9.6" ry="4.6"/><path d="M1.4 6.3 V22 Q1.4 26.8 13.2 27.2"/><path d="M20.6 6.3 V12.6"/><path d="M1.4 13.8 Q1.4 18.5 12 18.7"/><circle cx="22" cy="21.8" r="4.9"/></g></svg>
<div class="t mono" style="right:630.8px;top:1547.0px;font-size:28.5px;color:#8a9ba0"><span class="z">0<svg class="zs" viewBox="0 0 60 100"><path d="M15.5 75 L44.5 15" stroke="currentColor" stroke-width="9" stroke-linecap="butt"/></svg></span></div>
<svg style="left:2327.3px;top:1546.0px" width="28" height="28" viewBox="0 0 28 28"><g fill="none" stroke="#ba8c25" stroke-width="3" stroke-linecap="round"><ellipse cx="11" cy="6.3" rx="9.6" ry="4.6"/><path d="M1.4 6.3 V22 Q1.4 26.8 13.2 27.2"/><path d="M20.6 6.3 V12.6"/><path d="M1.4 13.8 Q1.4 18.5 12 18.7"/><circle cx="22" cy="21.8" r="4.9"/></g></svg>
<div class="t mono" style="right:178.0px;top:1547.0px;font-size:28.5px;color:#0c181d"><span class="z">0<svg class="zs" viewBox="0 0 60 100"><path d="M15.5 75 L44.5 15" stroke="currentColor" stroke-width="9" stroke-linecap="butt"/></svg></span></div>
<svg style="left:2779.5px;top:1546.0px" width="28" height="28" viewBox="0 0 28 28"><g fill="none" stroke="#ba8c25" stroke-width="3" stroke-linecap="round"><ellipse cx="11" cy="6.3" rx="9.6" ry="4.6"/><path d="M1.4 6.3 V22 Q1.4 26.8 13.2 27.2"/><path d="M20.6 6.3 V12.6"/><path d="M1.4 13.8 Q1.4 18.5 12 18.7"/><circle cx="22" cy="21.8" r="4.9"/></g></svg>
<div class="a" style="left:474px;top:1623.5px;width:2368px;height:2px;background:#dfe7ea"></div>
<div class="a" style="left:506px;top:1670.0px;width:40px;height:40px;border:2px solid #dde5e9;border-radius:7px;background:#fff"></div>
<svg style="left:578px;top:1650.0px" width="80" height="80" viewBox="0 0 80 80"><defs><linearGradient id="ag5" x1=".2" y1="0" x2=".6" y2="1"><stop offset="0" stop-color="#c6e7e7"/><stop offset="1" stop-color="#c4d3d8"/></linearGradient></defs><circle cx="40" cy="40" r="40" fill="url(#ag5)"/><circle cx="40" cy="28.2" r="12" fill="#edf4f4"/><path d="M26 47.7 H52 Q63.7 48 63.7 62.5 Q54 72 40 72 Q26 72 16 62.5 Q16.5 48 26 47.7 Z" fill="#eef4f4"/></svg>

<!-- ANNOTATIONS -->
<svg style="left:0;top:0" width="2932" height="1656" viewBox="0 0 2932 1656">
<rect x="1144.8" y="611.3" width="618" height="114.6" rx="38.5" ry="38.5" fill="none" stroke="#ff2a00" stroke-width="14.3"/>
<rect x="1224.9" y="879.7" width="1623.9" height="233.3" rx="38.5" ry="38.5" fill="none" stroke="#ff2a00" stroke-width="14.3"/>
<path d="M1451.8 751 Q1453.9 745.5 1456 751 C1458.5 790 1460.5 808 1463.8 823.7 L1476.8 819.7 L1452.9 865.8 L1429.8 819.7 L1442.9 823.7 C1446.3 808 1448.5 790 1451.8 751 Z" fill="#ff2a00"/>
</svg>

</body></html>
